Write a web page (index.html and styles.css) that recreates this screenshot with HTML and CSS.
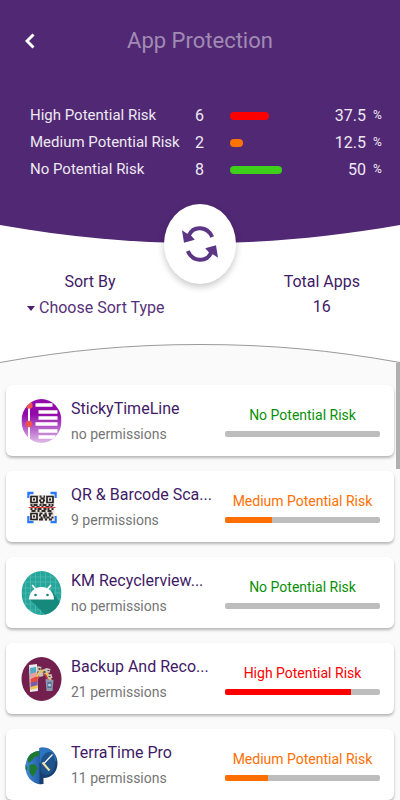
FILE: index.html
```html
<!DOCTYPE html>
<html lang="en">
<head>
<meta charset="utf-8">
<meta name="viewport" content="width=device-width, initial-scale=1">
<title>App Protection</title>
<link rel="stylesheet" href="styles.css">
</head>
<body>
<div class="screen">
  <header class="hero">
    <div class="topbar">
      <button class="back" type="button" aria-label="Back">
        <svg width="10" height="16" viewBox="0 0 10 16"><path d="M8.500 1.500L2 8l6.500 6.500" fill="none" stroke="#fff" stroke-width="3"/></svg>
      </button>
      <h1>App Protection</h1>
    </div>
    <table class="stats">
      <tbody>
        <tr><th scope="row">High Potential Risk</th><td class="count">6</td><td class="meter"><div class="fill high" style="width:37.5%"></div></td><td class="value">37.5</td><td class="unit">%</td></tr>
        <tr><th scope="row">Medium Potential Risk</th><td class="count">2</td><td class="meter"><div class="fill medium" style="width:12.5%"></div></td><td class="value">12.5</td><td class="unit">%</td></tr>
        <tr><th scope="row">No Potential Risk</th><td class="count">8</td><td class="meter"><div class="fill none" style="width:50%"></div></td><td class="value">50</td><td class="unit">%</td></tr>
      </tbody>
    </table>
  </header>

  <section class="summary">
    <svg class="curve" viewBox="0 0 400 18" preserveAspectRatio="none"><path d="M0 0C70 12 130 18 200 18S330 12 400 0Z" fill="#512874"/></svg>
    <button class="refresh" type="button" aria-label="Refresh">
      <svg width="36" height="36" viewBox="0 0 36 36">
        <g id="arrow"><path d="M30.200 11C25.500 .200 11.500-1 6.800 9.500" fill="none" stroke="#5c3585" stroke-width="4"/><path d="M0 4.200L4.800 7.400 8.800 9.200 12.800 13.800 2 16.800Z" fill="#5c3585"/></g>
        <use href="#arrow" transform="rotate(180 18 18)"/>
      </svg>
    </button>
    <div class="facts">
      <div class="fact">
        <label for="sort">Sort By</label>
        <div class="sort">
          <svg width="8" height="5" viewBox="0 0 8 5"><path d="M0 0h8L4 5Z" fill="#4a2170"/></svg>
          <select id="sort"><option>Choose Sort Type</option></select>
        </div>
      </div>
      <div class="fact total">
        <span>Total Apps</span>
        <span>16</span>
      </div>
    </div>
    <svg class="curve lower" viewBox="0 0 400 19" preserveAspectRatio="none"><path d="M0 19C70 6 130 .500 200 .500S330 6 400 19Z" fill="#fafafa"/><path d="M0 18.500C70 6 130 .500 200 .500S330 6 400 18.500" fill="none" stroke="#999" stroke-width="1"/></svg>
  </section>

  <main class="list">
    <div class="thumb"></div>
    <article class="card">
      <svg class="icon" viewBox="0 0 40 44">
        <defs><linearGradient id="violet" x2="0" y2="1"><stop offset=".35" stop-color="#920aaa"/><stop offset="1" stop-color="#dfbde8"/></linearGradient><clipPath id="disc"><ellipse cx="20" cy="22" rx="20" ry="22"/></clipPath></defs>
        <g clip-path="url(#disc)"><path fill="url(#violet)" d="M0 0h40v44H0z"/><path stroke="#fff" stroke-width="2" d="M7.500 0v44"/><path stroke="#fff" stroke-width="3.500" d="M14 6h17M17 13h19M14 25h22M17 19h19M17 32h19M17 38h17"/><circle cx="8" cy="6.500" r="3.200" fill="#f0524f"/><circle cx="7.500" cy="25" r="3.300" fill="#f0524f"/></g>
      </svg>
      <div class="app"><h2>StickyTimeLine</h2><p>no permissions</p></div>
      <div class="risk none"><span>No Potential Risk</span><div class="track"><div class="level" style="width:0%"></div></div></div>
    </article>
    <article class="card">
      <svg class="icon" viewBox="0 0 40 44">
        <path d="M7 13V8h5M29 8h5v5M34 31v6h-5M12 37H7v-6" fill="none" stroke="#2979ff" stroke-width="2.500"/>
        <path d="M8 10h25v26H8z" fill="#e9e6e4"/>
        <path d="M9.500 11.500h6v6h-6zM25.500 11.500h6v6h-6zM9.500 28.500h6v6h-6z" fill="none" stroke="#28211f" stroke-width="1.700"/>
        <path d="M11.500 13.500h2v2h-2zM27.500 13.500h2v2h-2zM11.500 30.500h2v2h-2z" fill="#28211f"/>
        <path d="M18 11.500h2m2 0h1.500M19 13.500h4M17.500 15.500h2m2 0h2M18.500 17.500h4M9 20h2m1 0h4m2 0h2m1 0h4m2 0h2m1 0h2M10 22h3m2 0h3m2 0h2m2 0h4m1 0h2M9 24h2m2 0h2m1 0h4m2 0h3m1 0h2m2 0h2M10 26h4m2 0h2m2 0h4m2 0h4M18 28.500h3m2 0h2m2 0h4M17.500 30.500h2m2 0h4m2 0h2M19 32.500h2m1 0h2m1 0h3m2 0h2M17.500 34.500h4m2 0h2m2 0h3" stroke="#332b29" stroke-width="1.800"/>
        <path d="M7 22.500h27" stroke="#e8463c" stroke-width="1"/>
      </svg>
      <div class="app"><h2>QR &amp; Barcode Sca...</h2><p>9 permissions</p></div>
      <div class="risk medium"><span>Medium Potential Risk</span><div class="track"><div class="level" style="width:30%"></div></div></div>
    </article>
    <article class="card">
      <svg class="icon" viewBox="0 0 40 44">
        <g clip-path="url(#disc)"><path fill="#26a69a" d="M0 0h40v44H0z"/><path d="M4 0v44M9 0v44M14 0v44M19 0v44M24 0v44M29 0v44M34 0v44M0 6h40M0 11h40M0 17h40M0 22h40M0 28h40M0 33h40M0 39h40" stroke="#67c2ba" stroke-width=".5"/><path d="M8 28L24 44H40V34L31 20Z" fill="#16887c"/></g>
        <path d="M7.500 28.500C7.500 24 9.500 20.500 13 18L10 14.500 11.200 13.500 14.500 17.200C18 15.500 22 15.500 25.500 17.200L28.800 13.500 30 14.500 27.200 18C30.500 20.500 32.500 24 32.500 28.500Z" fill="#fff"/><circle cx="14" cy="24" r="1.300" fill="#1c8478"/><circle cx="26" cy="24" r="1.300" fill="#1c8478"/>
      </svg>
      <div class="app"><h2>KM Recyclerview...</h2><p>no permissions</p></div>
      <div class="risk none"><span>No Potential Risk</span><div class="track"><div class="level" style="width:0%"></div></div></div>
    </article>
    <article class="card">
      <svg class="icon" viewBox="0 0 40 44">
        <ellipse cx="20" cy="22" rx="20" ry="22" fill="#74204f"/>
        <path d="M7.500 8L15.500 7 16.500 34 8.500 35Z" fill="#e9e7e9"/><path d="M8.500 11l6-1 .5 10-6 1z" fill="#54a9c6"/><path d="M9 17l6-2 1 5-7 3z" fill="#eba0a0"/><path d="M9 22l7-3 0 6-7 2z" fill="#e24b3d"/><path d="M9 26l7-2 0 5-7 3z" fill="#775cac"/><path d="M9 30l7-2v3l-7 2z" fill="#f4c34d"/>
        <path d="M16 20C19 11 25 12 29 24" fill="none" stroke="#e8c93f" stroke-width="3"/><path d="M16 22C20 14 24 15 27 24" fill="none" stroke="#d2504c" stroke-width="1.500"/>
        <path d="M16 9l4 1-1 5-4-1zM21 13l4-2 2 4-4 2zM25 11l4 1-1 4-4-1zM17 16l4-1 1 4-4 1zM26 18l4-1 1 4-4 1z" fill="#c9c4bb"/><path d="M17 11h2v2h-2zM22 14h2v2h-2zM26 13h2v1h-2zM27 19h2v1h-2z" fill="#634c42"/>
        <path d="M24 22L32 23 31 34 25 34Z" fill="#8e97ad"/><path d="M26 25l4 0 0 6-4 0z" fill="#526a96"/><circle cx="28" cy="28" r="1.500" fill="#acd3e4"/>
      </svg>
      <div class="app"><h2>Backup And Reco...</h2><p>21 permissions</p></div>
      <div class="risk high"><span>High Potential Risk</span><div class="track"><div class="level" style="width:81%"></div></div></div>
    </article>
    <article class="card">
      <svg class="icon" viewBox="0 0 40 44">
        <defs><linearGradient id="sea" x1="0" x2="1"><stop stop-color="#4289d5"/><stop offset="1" stop-color="#205ba3"/></linearGradient></defs>
        <path d="M20 7.500C9 8 4 15 4 24S10 41 20 41.500Z" fill="url(#sea)"/>
        <path d="M19 8C12 8 8 11 6 16L7 20 10 18 13 14 18 13ZM8 22L13 21 16 25 14 30 11 34 8 29ZM4 21L6 25 5 28 4 26Z" fill="#1d7830"/>
        <path d="M18 7V5C29 3 36 11 36 20S30 35 22 35V41H18Z" fill="#173f70"/>
        <path d="M18 5C28 3 34 9 35 18L22 21 18 20Z" fill="#2b75c2"/><path d="M19 20C20 12 25 8 30 9 35 14 35 24 30 30 25 34 20 31 19 28Z" fill="#1f538b"/>
        <path d="M22 21L31 11.500" stroke="#fff" stroke-width="1.200"/><path d="M21 19.500L28 27.500" stroke="#eee4aa" stroke-width="2"/>
      </svg>
      <div class="app"><h2>TerraTime Pro</h2><p>11 permissions</p></div>
      <div class="risk medium"><span>Medium Potential Risk</span><div class="track"><div class="level" style="width:28%"></div></div></div>
    </article>
  </main>
</div>
</body>
</html>
```
FILE: styles.css
```css
* { box-sizing: border-box; }
body { margin: 0; font-family: Roboto, "Liberation Sans", sans-serif; color: #3f1a66; background: #fafafa; }
h1, h2, p { margin: 0; font-weight: 400; }
button, select { border: 0; padding: 0; font: inherit; color: inherit; }
svg { display: block; }
.screen { height: 100vh; display: flex; flex-direction: column; overflow: hidden; }

.hero { flex: none; background: #512874; color: #eee8f2; padding-bottom: 42px; }
.topbar { display: grid; grid-template-columns: 60px 1fr 60px; align-items: center; height: 81px; }
.back { display: flex; align-items: center; height: 40px; padding-left: 25px; background: none; }
h1 { font-size: 22px; line-height: 28px; text-align: center; color: #a18bb3; }

.stats { width: 100%; margin-top: 21px; border-collapse: collapse; table-layout: fixed; line-height: 27px; font-size: 16px; }
.stats th, .stats td { padding: 0; font-weight: 400; text-align: left; white-space: nowrap; }
.stats th { width: 195px; padding-left: 30px; font-size: 15px; }
.stats .count { width: 35px; }
.stats .meter { width: 104px; }
.stats .value { text-align: right; }
.stats .unit { width: 34px; padding-left: 7px; font-size: 12px; }
.fill { height: 8px; border-radius: 4px; }
.fill.high { background: #f00; }
.fill.medium { background: #ff7300; }
.fill.none { background: #3fd01b; }

.summary { flex: none; position: relative; background: #fff; font-size: 16px; }
.curve { width: 100%; height: 18px; }
.curve.lower { height: 19px; }
.refresh { position: absolute; top: -21px; left: 50%; width: 72px; height: 80px; margin-left: -36px; display: flex; align-items: center; justify-content: center; border-radius: 50%; background: #fff; box-shadow: 0 3px 7px rgba(0, 0, 0, .22); }
.facts { display: flex; justify-content: space-between; padding: 26px 40px 23px 27px; }
.fact { display: flex; flex-direction: column; align-items: center; line-height: 26px; }
.fact label { padding-right: 12px; }
.sort { display: flex; align-items: center; gap: 4px; }
.sort select { appearance: none; height: 26px; line-height: 26px; background: none; color: #573279; }
.total { line-height: 25px; }

.list { flex: 1; min-height: 0; position: relative; display: flex; flex-direction: column; gap: 15px; padding: 22px 6px 15px; overflow-y: auto; scrollbar-width: none; }
.thumb { position: absolute; top: 0; right: 0; width: 4px; height: 106px; background: #b0b0b0; }
.card { flex: none; display: flex; align-items: center; height: 71px; padding: 0 14px 0 15px; background: #fff; border-radius: 6px; box-shadow: 0 2px 3px rgba(0, 0, 0, .28); }
.icon { flex: none; width: 41px; height: 44px; margin-right: 9px; }
.app { flex: 1; min-width: 0; white-space: nowrap; }
.app h2 { font-size: 16px; line-height: 26px; }
.app p { font-size: 14px; line-height: 24px; color: #757575; }
.risk { width: 155px; padding-top: 1px; text-align: center; font-size: 14px; line-height: 20px; white-space: nowrap; }
.track { height: 6px; margin-top: 6px; border-radius: 2px; background: #bdbdbd; overflow: hidden; }
.level { height: 100%; background: currentColor; }
.risk.none { color: #0a8f08; }
.risk.medium { color: #ff6f00; }
.risk.high { color: #f00; }
```
